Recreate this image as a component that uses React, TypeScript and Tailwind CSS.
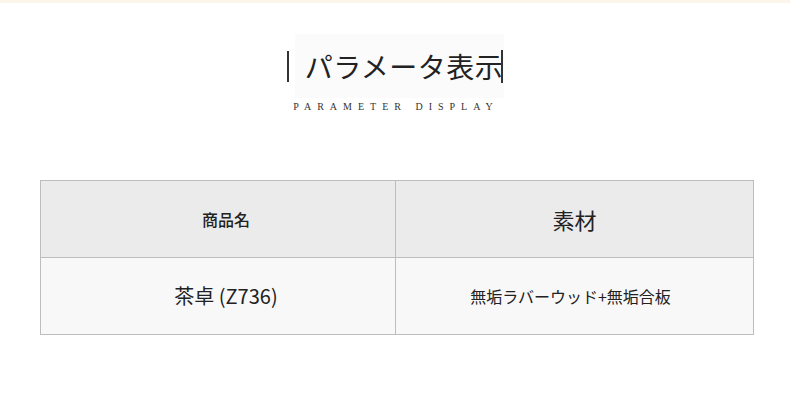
export default function App() {
  return (
    <div className="w-[790px] h-[419px] bg-white font-['Noto_Sans_CJK_JP','Noto_Sans',sans-serif] text-[#222]">
      <div className="h-[3px] bg-[#fcf6ea]" />
      <div className="flex flex-col items-center pt-[45px]">
        <div className="flex items-center h-[36px]">
          <span className="w-[2px] h-[31px] bg-[#333] mr-[6px]" />
          <span className="text-[28px] leading-[36px] tracking-[0.5px] bg-[#fbfbfb] pl-[10px] pr-[1px] py-[14px] -my-[14px]">パラメータ表示</span>
          <span className="w-[2px] h-[33px] bg-[#333] -ml-[3px]" />
        </div>
        <div className="mt-[17px] font-['Liberation_Serif',serif] text-[10px] leading-[12px] tracking-[6px] text-[#333] pl-[2px]">
          PARAMETER DISPLAY
        </div>
      </div>
      <div className="mx-[40px] mt-[67px] w-[714px] border border-[#bdbdbd]">
        <div className="grid grid-cols-[355px_1fr] h-[77px] bg-[#ebebeb] border-b border-[#bdbdbd]">
          <div className="flex items-center justify-center border-r border-[#bdbdbd] pl-[16px] text-[16px] font-medium">商品名</div>
          <div className="flex items-center justify-center text-[22px]">素材</div>
        </div>
        <div className="grid grid-cols-[355px_1fr] h-[76px] bg-[#f8f8f8]">
          <div className="flex items-center justify-center border-r border-[#bdbdbd] pl-[16px] text-[20px]">茶卓 (Z736)</div>
          <div className="flex items-center justify-center pr-[8px] text-[16px]">無垢ラバーウッド+無垢合板</div>
        </div>
      </div>
    </div>
  );
}
